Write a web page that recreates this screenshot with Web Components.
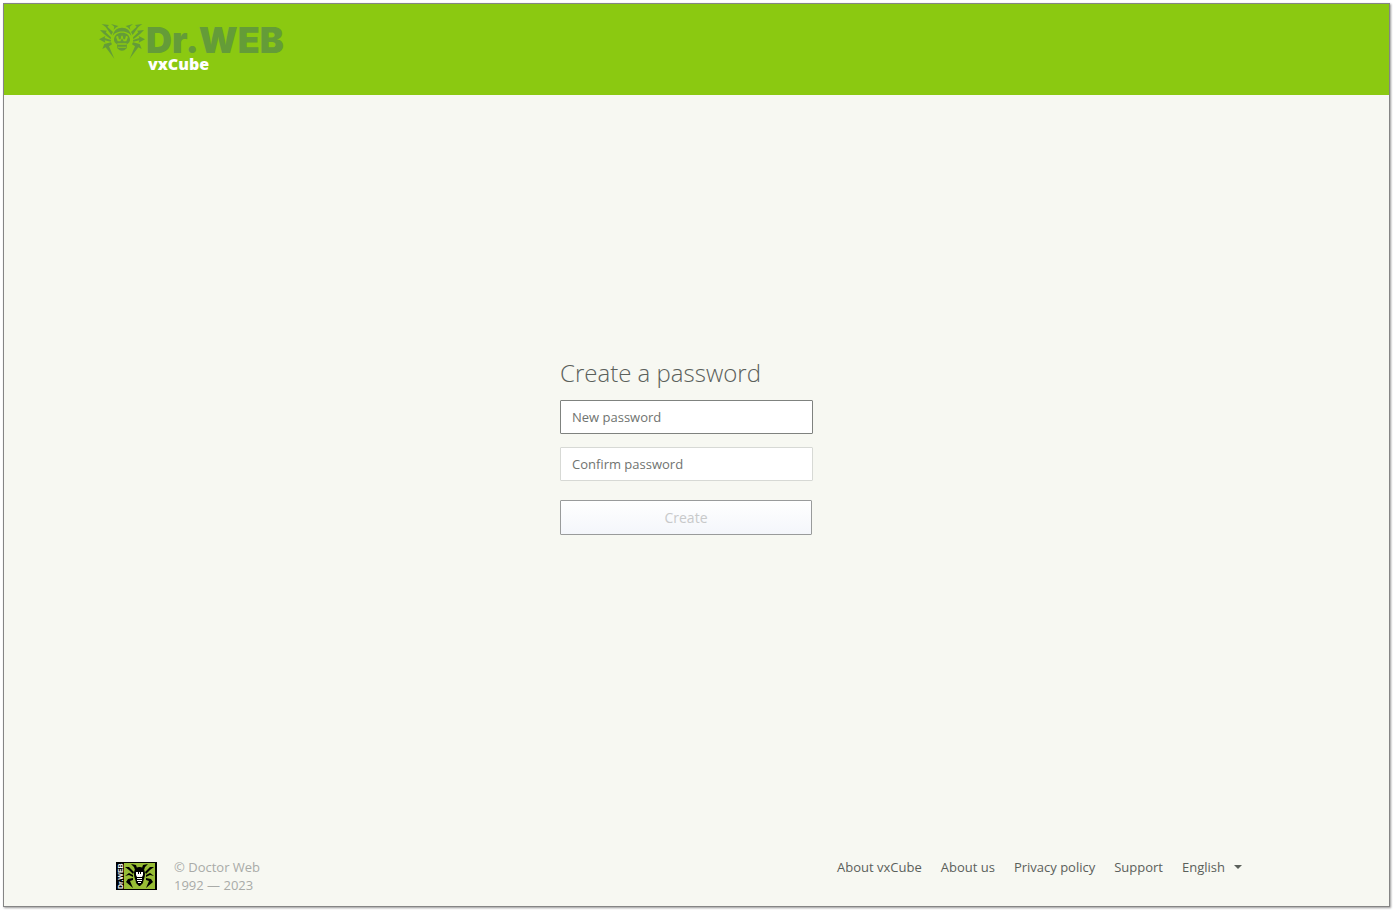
<!DOCTYPE html>
<html lang="en">
<head>
<meta charset="utf-8">
<meta name="viewport" content="width=device-width, initial-scale=1">
<title>Dr.Web vxCube</title>
<style>
  body {
    margin: 0;
    background: #fff;
    color: #5b605b;
    font: 13px/18px "Open Sans", sans-serif;
  }
</style>
</head>
<body>
<vx-page>
  <vx-header slot="header"></vx-header>
  <vx-password-form heading="Create a password"></vx-password-form>
  <vx-footer slot="footer">
    <a href="#about-vxcube">About vxCube</a>
    <a href="#about-us">About us</a>
    <a href="#privacy">Privacy policy</a>
    <a href="#support">Support</a>
  </vx-footer>
</vx-page>

<script>
class VxPage extends HTMLElement {
  constructor () {
    super()

    const shadow = this.attachShadow({mode: 'open'})
    shadow.innerHTML = `
      <style>
        :host {
          display: flex;
          box-sizing: border-box;
          min-height: 100vh;
          padding: 3px 5px 5px 3px;
        }
        .frame {
          flex: 1;
          display: flex;
          flex-direction: column;
          border: 1px solid #858585;
          background: #f7f8f2;
          box-shadow: 1px 1px 2px #999;
        }
        main {
          flex: 1;
          display: flex;
          align-items: center;
          justify-content: center;
          padding-right: 20px;
        }
      </style>
      <div class="frame">
        <slot name="header"></slot>
        <main><slot></slot></main>
        <slot name="footer"></slot>
      </div>
    `
  }
}

class VxSpider extends HTMLElement {
  constructor () {
    super()

    const shadow = this.attachShadow({mode: 'open'})
    shadow.innerHTML = `
      <style>
        :host {
          display: block;
        }
        svg {
          display: block;
          width: 100%;
          height: 100%;
        }
      </style>
      <svg viewBox="0 0 138 105" aria-hidden="true">
        <defs>
          <g id="legs">
            <path d="M36 0 L58 6 L50 11 L44 17 L46 8 Z"/>
            <path d="M8 0 L30 3 L25 8 L42 24 L37 33 L20 9 Z"/>
            <path d="M3 18 L24 20 L20 25 L36 40 L35 46 L14 29 Z"/>
            <path d="M0 46 L19 36 L17 42 L36 48 L35 53 L17 49 L19 56 Z"/>
            <path d="M10 75 L16 60 L36 55 L39 61 L30 67 L46 104 L20 70 Z"/>
          </g>
        </defs>
        <g fill="currentColor">
          <use href="#legs"/>
          <use href="#legs" transform="matrix(-1 0 0 1 138 0)"/>
          <path d="M69 11 C54 11 44 19 41 36 C50 18 88 18 97 36 C94 19 84 11 69 11 Z"/>
          <path fill-rule="evenodd" d="M69 26 C55 26 46 34 45 46 C44 53 49 58 54 61 L55 73 Q69 88 83 73 L84 61 C89 58 94 53 93 46 C92 34 83 26 69 26 Z
            M51 38 L57 35 L60 46 L65 46 L67 35 L71 35 L73 46 L78 46 L81 35 L87 38 L82 52 L74 52 L69 43 L64 52 L56 52 Z
            M55 58 H83 V62 H55 Z M57 68 H81 V71 H57 Z"/>
        </g>
      </svg>
    `
  }
}

class VxHeader extends HTMLElement {
  constructor () {
    super()

    const shadow = this.attachShadow({mode: 'open'})
    shadow.innerHTML = `
      <style>
        :host {
          display: block;
          box-sizing: border-box;
          height: 91px;
          padding: 20px 95px 0;
          background: #8bc911;
        }
        .logo {
          display: inline-grid;
          grid-template-columns: 46px auto;
          grid-template-rows: 32px 16px;
          column-gap: 1px;
          color: #649c38;
          text-decoration: none;
        }
        vx-spider {
          width: 46px;
          height: 35px;
        }
        .brand {
          font: 900 36px/32px Inter, sans-serif;
        }
        .product {
          grid-column: 2;
          padding-left: 2px;
          color: #fff;
          font: 800 16px/16px "Open Sans", sans-serif;
        }
      </style>
      <header>
        <a class="logo" href="#home">
          <vx-spider></vx-spider>
          <span class="brand">Dr.WEB</span>
          <span class="product">vxCube</span>
        </a>
      </header>
    `
  }
}

class VxPasswordForm extends HTMLElement {
  constructor () {
    super()

    const shadow = this.attachShadow({mode: 'open'})
    shadow.innerHTML = `
      <style>
        :host {
          display: block;
          width: 253px;
        }
        form {
          display: flex;
          flex-direction: column;
        }
        h1 {
          margin: 0 0 11px;
          font-size: 24px;
          font-weight: 300;
          line-height: 32px;
        }
        input,
        button {
          box-sizing: border-box;
          height: 34px;
          border: 1px solid #d7d9d5;
          border-radius: 1px;
          font: inherit;
          outline: none;
        }
        input {
          margin-bottom: 13px;
          padding: 0 11px;
          background: #fff;
          color: inherit;
        }
        input::placeholder {
          color: #707370;
        }
        input.current,
        input:focus {
          border-color: #7f827f;
        }
        button {
          height: 35px;
          margin: 6px 1px 0 0;
          border-color: #999b9b;
          background: linear-gradient(#fff, #f4f6fb);
          color: #c8c9ca;
          font-size: 14px;
        }
      </style>
      <form>
        <h1></h1>
        <input class="current" type="password" placeholder="New password" aria-label="New password" autocomplete="new-password">
        <input type="password" placeholder="Confirm password" aria-label="Confirm password" autocomplete="new-password">
        <button type="submit" disabled>Create</button>
      </form>
    `

    this.inputs = [...shadow.querySelectorAll('input')]
    this.button = shadow.querySelector('button')
    this.updateView = this.updateView.bind(this)
    this.inputs.forEach(input => input.addEventListener('input', this.updateView))
  }

  connectedCallback () {
    this.shadowRoot.querySelector('h1').textContent = this.getAttribute('heading')
  }

  updateView () {
    const [first, second] = this.inputs
    this.button.disabled = !first.value || first.value !== second.value
  }
}

class VxBadge extends HTMLElement {
  constructor () {
    super()

    const shadow = this.attachShadow({mode: 'open'})
    shadow.innerHTML = `
      <style>
        :host {
          display: flex;
          box-sizing: border-box;
          width: 41px;
          height: 28px;
          border: 1px solid #000;
          border-right-width: 2px;
          background: #98bd35;
          color: #000;
        }
        span {
          width: 7px;
          background: #000;
          color: #fff;
          font: 700 7px/7px "Liberation Sans", sans-serif;
          text-align: center;
          white-space: nowrap;
          writing-mode: vertical-rl;
          transform: rotate(180deg);
        }
        svg {
          flex: 1;
          display: block;
        }
      </style>
      <span>Dr.WEB</span>
      <svg viewBox="0 0 31 26" aria-hidden="true">
        <defs>
          <g id="side">
            <path d="M7 1 L12 2 L13 5 L11 7 L10 4 Z"/>
            <path d="M1 4 L5 4 L10 9 L9 11 L5 7 Z"/>
            <path d="M1 13 L5 10 L9 12 L9 14 L5 12 Z"/>
            <path d="M2 19 L4 16 L9 15 L9 17 L6 18 L9 25 Z"/>
          </g>
        </defs>
        <use href="#side"/>
        <use href="#side" transform="matrix(-1 0 0 1 31 0)"/>
        <path d="M15 4 H16 C19 4 21 7 21 11 C21 15 19 17 19 20 L16 23 H15 L12 20 C12 17 10 15 10 11 C10 7 12 4 15 4 Z"/>
        <path fill="#fff" d="M12 9 h2 v2 h1 v-2 h1 v2 h1 v-2 h2 v3 l-1 2 h-5 l-1 -2 Z M13 15 h5 v1 h-5 Z M13 17 h5 v1 h-5 Z M14 19 h3 v1 h-3 Z"/>
      </svg>
    `
  }
}

class VxFooter extends HTMLElement {
  constructor () {
    super()

    const shadow = this.attachShadow({mode: 'open'})
    shadow.innerHTML = `
      <style>
        :host {
          display: block;
          padding: 61px 147px 12px 112px;
        }
        footer,
        nav,
        .company {
          display: flex;
        }
        footer {
          justify-content: space-between;
        }
        .company {
          align-items: center;
          gap: 17px;
          color: #a9aba8;
        }
        nav {
          align-items: flex-start;
          gap: 19px;
        }
        ::slotted(a) {
          color: inherit;
          text-decoration: none;
        }
        .language {
          display: flex;
          align-items: center;
          gap: 9px;
        }
        select {
          appearance: none;
          height: 18px;
          margin: 0;
          padding: 0;
          border: 0;
          background: none;
          color: inherit;
          font: inherit;
        }
        .language::after {
          content: "";
          border: 4px solid transparent;
          border-top-color: currentColor;
          border-bottom: 0;
        }
      </style>
      <footer>
        <div class="company">
          <vx-badge></vx-badge>
          <span>© Doctor Web<br>1992 — 2023</span>
        </div>
        <nav>
          <slot></slot>
          <label class="language">
            <select aria-label="Language">
              <option>English</option>
            </select>
          </label>
        </nav>
      </footer>
    `
  }
}

customElements.define('vx-page', VxPage)
customElements.define('vx-spider', VxSpider)
customElements.define('vx-header', VxHeader)
customElements.define('vx-password-form', VxPasswordForm)
customElements.define('vx-badge', VxBadge)
customElements.define('vx-footer', VxFooter)
</script>
</body>
</html>
